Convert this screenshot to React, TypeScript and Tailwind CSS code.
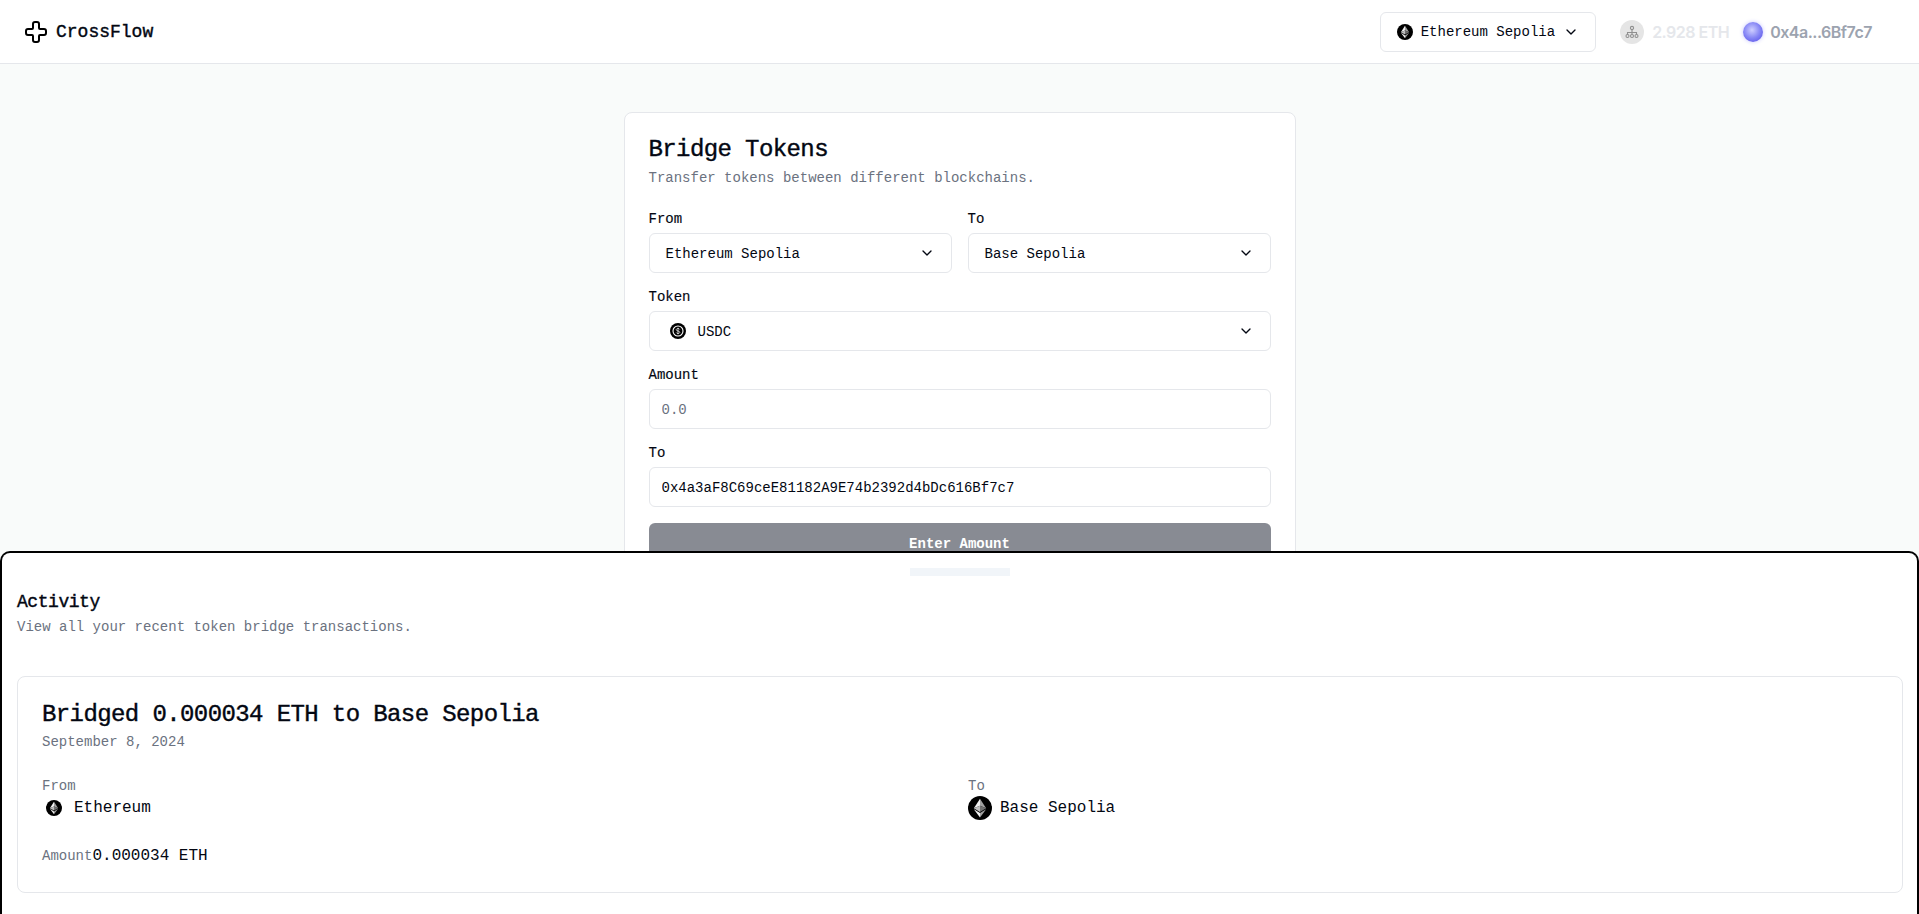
import { ChevronDown, Cross } from 'lucide-react';

const EthIcon = ({ size = 16 }: { size?: number }) => (
  <svg width={size} height={size} viewBox="0 0 32 32" className="shrink-0">
    <circle cx="16" cy="16" r="16" fill="#000" />
    <path d="M16 3.500v9.500l8.200 3.400z" fill="#a0a0a0" />
    <path d="M16 3.500L7.800 16.400l8.200-3.400z" fill="#f0f0f0" />
    <path d="M16 13l8.200 3.400L16 21.200z" fill="#707070" />
    <path d="M16 13l-8.200 3.400 8.200 4.800z" fill="#bdbdbd" />
    <path d="M16 22.800v5.700l8.200-11z" fill="#a0a0a0" />
    <path d="M16 22.800l-8.200-5.300 8.200 11z" fill="#f0f0f0" />
  </svg>
);

const UsdcIcon = () => (
  <svg width="16" height="16" viewBox="0 0 32 32" className="shrink-0">
    <circle cx="16" cy="16" r="16" fill="#000" />
    <circle cx="16" cy="16" r="10" fill="none" stroke="#fff" strokeWidth="2.200" />
    <path d="M19.500 13c-.5-1.400-1.800-2-3.500-2-2 0-3.500 1-3.500 2.500 0 3.500 7 1.500 7 5 0 1.500-1.500 2.500-3.500 2.500-1.700 0-3-.6-3.500-2M16 9.500v13" fill="none" stroke="#fff" strokeWidth="1.400" />
  </svg>
);

const NodesIcon = () => (
  <svg width="14" height="14" viewBox="0 0 14 14" fill="none" stroke="#8f8f8f" strokeWidth="1.100">
    <circle cx="7" cy="3" r="1.600" />
    <circle cx="2.500" cy="11" r="1.500" />
    <circle cx="7" cy="11" r="1.500" />
    <circle cx="11.500" cy="11" r="1.500" />
    <path d="M7 4.600v5M2.500 9.500V7.500h9v2" />
  </svg>
);

const Field = ({ label, children }: { label: string; children: React.ReactNode }) => (
  <div className="flex flex-col gap-2 min-w-0">
    <label className="h-3.5 pt-px text-sm leading-none font-medium [-webkit-text-stroke:0.15px]">{label}</label>
    {children}
  </div>
);

const SelectBox = ({ children }: { children: React.ReactNode }) => (
  <button className="flex h-10 w-full items-center justify-between rounded-md border border-[#e5e7eb] bg-white px-4 text-sm">
    <span className="flex items-center gap-2">{children}</span>
    <ChevronDown size={16} strokeWidth={2} className="text-[#030712]" />
  </button>
);

const App = () => {
  return (
    <div className="h-[914px] overflow-hidden bg-[#f9fbfa] font-['Liberation_Mono',monospace] text-[#030712]">
      {/* Header */}
      <header className="flex h-16 items-center justify-between border-b border-[#e5e7eb] bg-white pl-6 pr-[47px]">
        <div className="flex items-center gap-2">
          <Cross size={24} strokeWidth={2} className="text-black" />
          <span className="text-lg font-medium [-webkit-text-stroke:0.4px]">CrossFlow</span>
        </div>
        <div className="flex items-center">
          <button className="flex h-10 items-center gap-2 rounded-md border border-[#e5e7eb] bg-white px-4 text-sm">
            <EthIcon />
            <span>Ethereum Sepolia</span>
            <ChevronDown size={16} strokeWidth={2} />
          </button>
          <div className="ml-6 flex items-center gap-2 font-['Inter',sans-serif] text-base font-semibold tracking-[-0.5px]">
            <span className="flex h-6 w-6 items-center justify-center rounded-full bg-[#e5e5e5]">
              <NodesIcon />
            </span>
            <span className="text-[#e5e7eb]">2.928 ETH</span>
            <span className="ml-[6px] h-5 w-5 rounded-full bg-[radial-gradient(circle_at_45%_40%,#cfcfff_0%,#8585f5_50%,#4f46e5_100%)] shadow-[0_0_4px_#c7c7ff]" />
            <span className="-ml-[1px] text-[#9ca3af]">0x4a...6Bf7c7</span>
          </div>
        </div>
      </header>

      {/* Bridge form */}
      <main className="flex justify-center pt-12">
        <div className="w-[672px] rounded-lg border border-[#e5e7eb] bg-white">
          <div className="flex flex-col gap-[5px] px-6 pb-[23px] pt-6">
            <h1 className="text-2xl font-normal leading-[26px] tracking-tight [-webkit-text-stroke:0.4px]">Bridge Tokens</h1>
            <p className="text-sm text-[#6b7280]">Transfer tokens between different blockchains.</p>
          </div>
          <div className="flex flex-col gap-4 px-6 pb-6">
            <div className="grid grid-cols-2 gap-4">
              <Field label="From">
                <SelectBox><span className="pt-0.5">Ethereum Sepolia</span></SelectBox>
              </Field>
              <Field label="To">
                <SelectBox><span className="pt-0.5">Base Sepolia</span></SelectBox>
              </Field>
            </div>
            <Field label="Token">
              <SelectBox>
                <span className="flex h-6 w-6 items-center justify-center">
                  <UsdcIcon />
                </span>
                <span className="pt-0.5">USDC</span>
              </SelectBox>
            </Field>
            <Field label="Amount">
              <input
                placeholder="0.0"
                className="h-10 w-full rounded-md border border-[#e5e7eb] bg-white px-3 pt-0.5 text-sm outline-none placeholder:text-[#6b7280]"
              />
            </Field>
            <Field label="To">
              <input
                readOnly
                value="0x4a3aF8C69ceE81182A9E74b2392d4bDc616Bf7c7"
                className="h-10 w-full rounded-md border border-[#e5e7eb] bg-white px-3 pt-0.5 text-sm outline-none"
              />
            </Field>
            <button className="h-10 w-full rounded-md bg-[#888b93] pt-0.5 text-sm font-bold text-white">Enter Amount</button>
          </div>
        </div>
      </main>

      {/* Activity drawer */}
      <div className="fixed inset-x-0 bottom-0 h-[363px] rounded-t-[10px] border-2 border-b-0 border-black bg-white">
        <div className="mx-auto mt-[15px] h-2 w-[100px] bg-[#f1f5f9]" />
        <div className="flex flex-col gap-1.5 pb-4 pl-[15px] pr-4 pt-[17px]">
          <h2 className="text-lg font-normal leading-none tracking-tight [-webkit-text-stroke:0.4px]">Activity</h2>
          <p className="text-sm text-[#6b7280]">View all your recent token bridge transactions.</p>
        </div>
        <div className="ml-[15px] mr-[14px] mt-[23px] rounded-lg border border-[#e5e7eb] bg-white">
          <div className="flex flex-col gap-1 px-6 pb-6 pt-[25px]">
            <h3 className="text-2xl font-normal leading-[26px] tracking-tight [-webkit-text-stroke:0.4px]">Bridged 0.000034 ETH to Base Sepolia</h3>
            <p className="text-sm text-[#6b7280]">September 8, 2024</p>
          </div>
          <div className="flex flex-col gap-6 px-6 pb-6">
            <div className="grid grid-cols-2 gap-4">
              <div>
                <p className="text-sm text-[#6b7280]">From</p>
                <div className="flex items-center gap-2">
                  <span className="flex h-6 w-6 items-center justify-center">
                    <EthIcon />
                  </span>
                  <span>Ethereum</span>
                </div>
              </div>
              <div>
                <p className="text-sm text-[#6b7280]">To</p>
                <div className="flex items-center gap-2">
                  <EthIcon size={24} />
                  <span>Base Sepolia</span>
                </div>
              </div>
            </div>
            <div className="flex items-center">
              <span className="text-sm text-[#6b7280]">Amount</span>
              <span>0.000034 ETH</span>
            </div>
          </div>
        </div>
      </div>
    </div>
  );
};

export default App;
